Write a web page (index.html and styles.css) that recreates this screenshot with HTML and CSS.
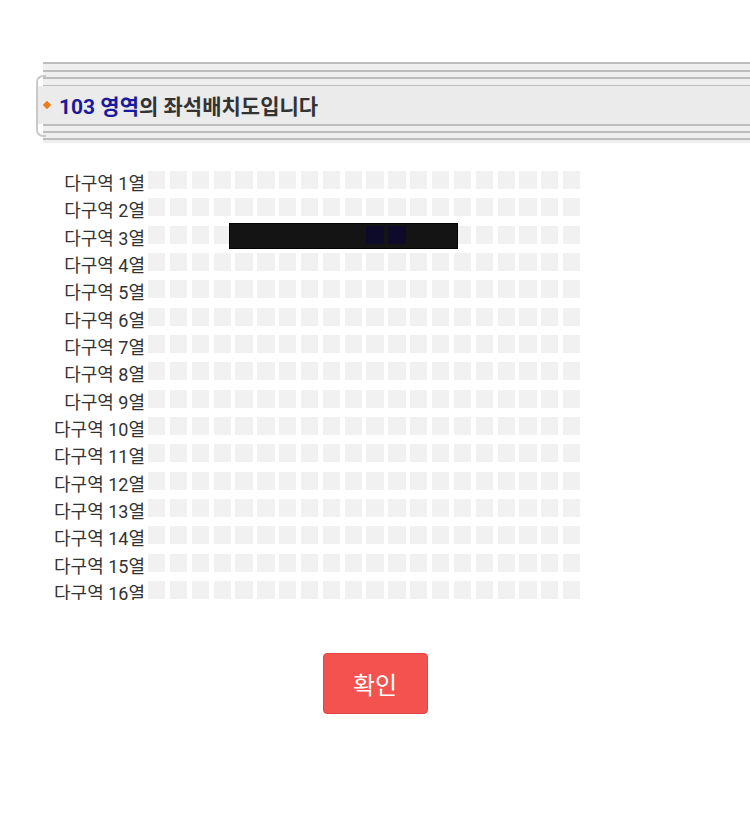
FILE: index.html
```html
<!DOCTYPE html>
<html lang="ko">
<head>
<meta charset="UTF-8">
<meta name="viewport" content="width=device-width, initial-scale=1.0">
<title>좌석배치도</title>
<link rel="stylesheet" href="styles.css">
</head>
<body>
    <div class="banner">
        <div class="stripes top"></div>
        <div class="band">
            <span class="dot"></span>
            <span class="zone">103 영역</span>의 좌석배치도입니다
        </div>
        <div class="stripes bottom"></div>
    </div>

    <div class="seatmap" id="seatmap">
        <!-- rows are filled in by the script below -->
        <div class="cover"></div>
    </div>

    <div class="actions">
        <button class="confirm" type="button">확인</button>
    </div>

    <script>
        // build 16 rows of 20 seats
        let map = document.getElementById("seatmap");
        for (let r = 1; r <= 16; r++) {
            let row = document.createElement("div");
            row.className = "row";
            let label = document.createElement("div");
            label.className = "label";
            label.textContent = "다구역 " + r + "열";
            row.appendChild(label);
            let seats = document.createElement("div");
            seats.className = "seats";
            for (let c = 0; c < 20; c++) {
                let seat = document.createElement("span");
                seat.className = "seat";
                // the two picked seats in row 3
                if (r === 3 && (c === 10 || c === 11)) {
                    seat.className = "seat picked";
                }
                seats.appendChild(seat);
            }
            row.appendChild(seats);
            map.appendChild(row);
        }
    </script>
</body>
</html>
```

FILE: styles.css
```css
body {
    margin: 0;
    padding: 0;
    background-color: #fff;
    font-family: Roboto, "Noto Sans CJK KR", sans-serif;
    overflow: hidden;
}

/* title banner */
.banner {
    position: relative;
    margin: 62px 0 0 36px;
}
.banner::before {
    content: "";
    position: absolute;
    left: 0;
    top: 13px;
    bottom: 6px;
    width: 8px;
    border: 2px solid #c9c9c9;
    border-right: none;
    border-radius: 7px 0 0 7px;
}
.stripes {
    margin-left: 7px;
    background: repeating-linear-gradient(to bottom, #bdbdbd 0, #bdbdbd 2px, #efefef 2px, #efefef 7.6px);
}
.stripes.top {
    height: 24px;
}
.stripes.bottom {
    height: 19px;
    background: repeating-linear-gradient(to bottom, #bdbdbd 0, #bdbdbd 2px, #efefef 2px, #efefef 7.2px);
}
.band {
    position: relative;
    height: 38px;
    margin-left: 1px;
    padding-left: 6px;
    display: flex;
    align-items: center;
    background-color: #ebebeb;
    border-left: 1px solid #c9c9c9;
    font-size: 21px;
    font-weight: 700;
    color: #333;
}
.dot {
    width: 6px;
    height: 6px;
    margin-right: 9px;
    background-color: #f07a1a;
    transform: rotate(45deg);
}
.zone {
    color: #1a1a9c;
}

/* seat map */
.seatmap {
    position: relative;
    margin-top: 28px;
    height: 429px;
    overflow: hidden;
    display: flex;
    flex-direction: column;
    gap: 1.33px;
}
.row {
    display: flex;
    align-items: flex-start;
    gap: 3px;
}
.label {
    width: 145px;
    flex-shrink: 0;
    text-align: right;
    font-size: 18px;
    line-height: 26px;
    color: #333;
    white-space: nowrap;
}
.seats {
    display: flex;
    gap: 4.55px;
}
.seat {
    width: 17.3px;
    height: 18px;
    background-color: #f1f1f1;
}
.seat.picked {
    position: relative;
    z-index: 2;
    background-color: #0e0b2a;
}
.cover {
    position: absolute;
    left: 229px;
    top: 52px;
    width: 229px;
    height: 26px;
    z-index: 1;
    box-sizing: border-box;
    background-color: #141414;
    border: 1px solid #050505;
}

/* button */
.actions {
    display: flex;
    justify-content: center;
    margin-top: 53px;
}
.confirm {
    width: 105px;
    height: 61px;
    background-color: #f4524f;
    border: 1px solid #e24643;
    border-radius: 4px;
    color: #fff;
    font-family: Roboto, "Noto Sans CJK KR", sans-serif;
    font-size: 24px;
    cursor: pointer;
}
```
